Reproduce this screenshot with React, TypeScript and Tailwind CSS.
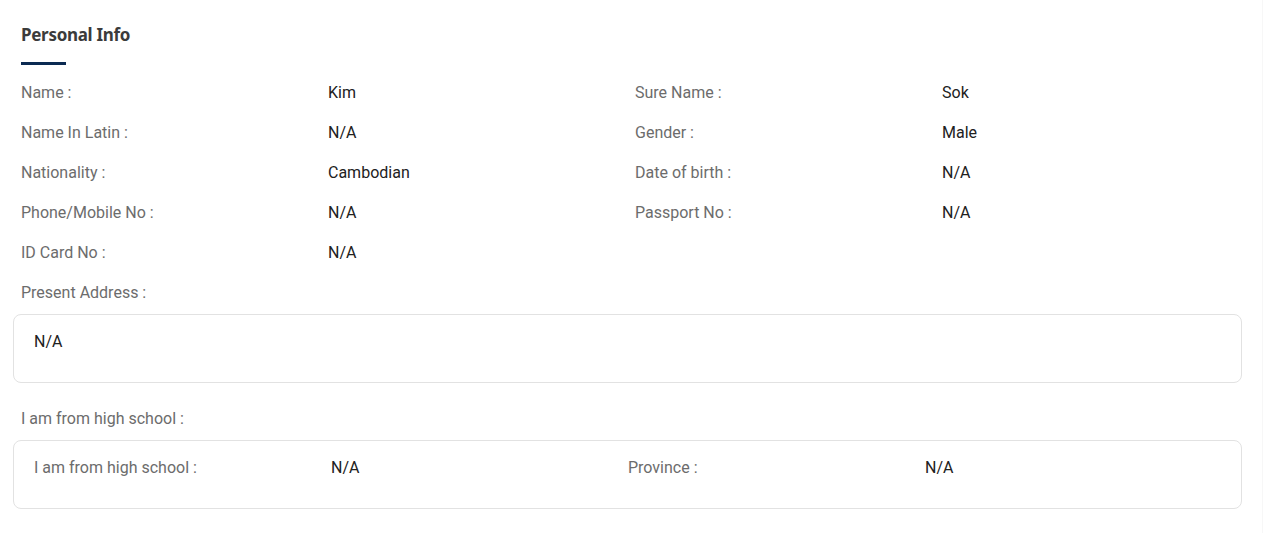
const rows: [string, string, string?, string?][] = [
  ["Name :", "Kim", "Sure Name :", "Sok"],
  ["Name In Latin :", "N/A", "Gender :", "Male"],
  ["Nationality :", "Cambodian", "Date of birth :", "N/A"],
  ["Phone/Mobile No :", "N/A", "Passport No :", "N/A"],
  ["ID Card No :", "N/A"],
];

export default function App() {
  return (
    <div className="flex w-full h-[533px] bg-white font-['Roboto',sans-serif] text-[16px] leading-6">
      <div className="flex-1 px-[13px] pt-[23px]">
        {/* Heading */}
        <div className="px-2">
          <h2 className="font-['Noto_Sans',sans-serif] text-[17px] font-bold leading-6 text-[#3b3b3b] tracking-[-0.3px]">
            Personal Info
          </h2>
          <div className="mt-[15px] h-[3px] w-[45px] bg-[#0b2a52]" />
        </div>

        {/* Info grid */}
        <div className="ml-2 w-[1228px] mt-[16px] grid grid-cols-4">
          {rows.map(([l1, v1, l2, v2]) => (
            <div key={l1} className="contents">
              <div className="h-10 text-[#6c6c6c]">{l1}</div>
              <div className="h-10 text-[#212121]">{v1}</div>
              <div className="h-10 text-[#6c6c6c]">{l2}</div>
              <div className="h-10 text-[#212121]">{v2}</div>
            </div>
          ))}
        </div>

        <div className="px-2 text-[#6c6c6c]">Present Address :</div>
        <div className="mt-[9px] h-[69px] w-[1229px] rounded-lg border border-[#e2e2e2] px-[20px] pt-[15px] text-[#212121]">
          N/A
        </div>

        <div className="px-2 mt-[24px] text-[#6c6c6c]">I am from high school :</div>
        <div className="mt-[9px] h-[69px] w-[1229px] rounded-lg border border-[#e2e2e2] pl-[20px] pr-[19px] pt-[15px] grid grid-cols-4 content-start">
          <div className="text-[#6c6c6c]">I am from high school :</div>
          <div className="text-[#212121]">N/A</div>
          <div className="text-[#6c6c6c]">Province :</div>
          <div className="text-[#212121]">N/A</div>
        </div>
      </div>
      <div className="w-[7px] bg-[#f7f7f7]" />
    </div>
  );
}
